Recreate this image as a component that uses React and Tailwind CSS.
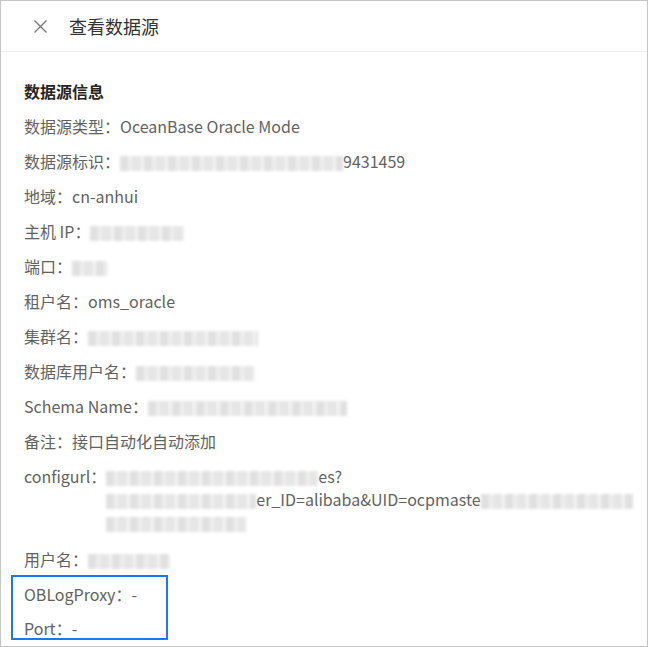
// mosaic placeholder for masked values
function Masked({ className }) {
  return (
    <span
      className={
        "inline-block align-middle h-[15px] blur-[1.5px] bg-[repeating-linear-gradient(90deg,#e0e0e0_0_8px,#efefef_8px_12px,#e6e6e6_12px_21px,#f4f4f4_21px_24px)] " +
        className
      }
    />
  );
}

function Row({ label, children, mb = "mb-[13px]" }) {
  return (
    <div className={"leading-[22px] whitespace-nowrap " + mb}>
      {label}：{children}
    </div>
  );
}

export default function App() {
  return (
    <div
      className="w-[648px] h-[647px] bg-white border border-[#c6c6c6] overflow-hidden text-[#626262]"
      style={{ fontFamily: '"Noto Sans CJK SC", "Noto Sans", sans-serif' }}
    >
      {/* drawer header */}
      <div className="h-[51px] flex items-center border-b border-[#ececec]">
        <svg
          className="ml-[33px] shrink-0"
          width="13"
          height="13"
          viewBox="0 0 13 13"
          fill="none"
          stroke="#777"
          strokeWidth="1.3"
        >
          <path d="M0.5 0.5L12.5 12.5M12.5 0.5L0.5 12.5" />
        </svg>
        <h1 className="ml-[22px] text-[18px] text-[#333] leading-none">查看数据源</h1>
      </div>

      <div className="pl-[23px] pt-[28px] text-[16px]">
        <h2 className="font-bold text-[16px] text-[#262626] leading-[22px] mb-[13px]">数据源信息</h2>

        <Row label="数据源类型">OceanBase Oracle Mode</Row>
        <Row label="数据源标识">
          <Masked className="w-[223px]" />9431459
        </Row>
        <Row label="地域">cn-anhui</Row>
        <Row label="主机 IP">
          <Masked className="w-[94px]" />
        </Row>
        <Row label="端口">
          <Masked className="w-[36px]" />
        </Row>
        <Row label="租户名">oms_oracle</Row>
        <Row label="集群名">
          <Masked className="w-[170px]" />
        </Row>
        <Row label="数据库用户名">
          <Masked className="w-[119px]" />
        </Row>
        <Row label="Schema Name">
          <Masked className="w-[199px]" />
        </Row>
        <Row label="备注">接口自动化自动添加</Row>

        {/* wrapped config url */}
        <div className="flex leading-[23px] mb-[14px]">
          <span className="whitespace-nowrap shrink-0">configurl：</span>
          <div className="flex flex-col">
            <div className="whitespace-nowrap">
              <Masked className="w-[212px]" />es?
            </div>
            <div className="whitespace-nowrap">
              <Masked className="w-[150px]" />er_ID=alibaba&amp;UID=ocpmaste
              <Masked className="w-[152px]" />
            </div>
            <div className="whitespace-nowrap">
              <Masked className="w-[140px]" />
            </div>
          </div>
        </div>

        <Row label="用户名" mb="mb-[5px]">
          <Masked className="w-[82px]" />
        </Row>

        {/* highlighted proxy fields */}
        <div className="-ml-[13px] w-[157px] border-2 border-[#1677ff] pl-[11px] pt-[6px]">
          <Row label="OBLogProxy">-</Row>
          <div className="leading-[20px] whitespace-nowrap">Port：-</div>
        </div>
      </div>
    </div>
  );
}
